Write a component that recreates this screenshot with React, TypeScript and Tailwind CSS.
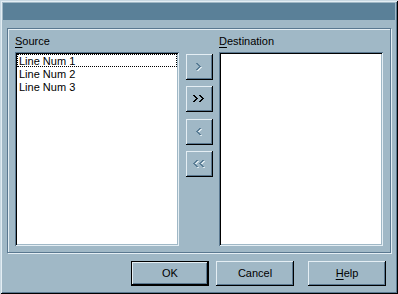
import type { ReactNode } from 'react';

const CHEVRON = [[0, 1], [1, 2], [2, 3], [3, 4], [2, 3], [1, 2], [0, 1]];

function Arrow({ dir, double, disabled }: { dir: 'left' | 'right'; double?: boolean; disabled?: boolean }) {
  const offsets = double ? [0, 6] : [0];
  const w = double ? 12 : 6;
  const pixels = (dx: number, dy: number, color: string) =>
    offsets.flatMap(o =>
      CHEVRON.flatMap((row, r) =>
        row.map(x => {
          const px = dir === 'right' ? x : 4 - x;
          return <rect key={`${color}-${o}-${r}-${x}`} x={o + px + dx} y={r + dy} width={1} height={1} fill={color} />;
        })
      )
    );
  return (
    <svg width={w} height={8} shapeRendering="crispEdges">
      {disabled && pixels(1, 1, '#dce8ee')}
      {pixels(0, 0, disabled ? '#5a7d95' : '#000')}
    </svg>
  );
}

function Accel({ children, rest }: { children: ReactNode; rest: string }) {
  return (
    <span>
      <span className="underline decoration-1 underline-offset-[2px]">{children}</span>
      {rest}
    </span>
  );
}

function SideButton({ children }: { children: ReactNode }) {
  return (
    <div className="h-[26px] w-[27px] flex items-center justify-center pr-[1px] bg-[#a0b8c6] shadow-[inset_-1px_-1px_0_#000,inset_1px_1px_0_#e4eef4,inset_-2px_-2px_0_#5a7890]">
      {children}
    </div>
  );
}

function PushButton({ children, isDefault }: { children: ReactNode; isDefault?: boolean }) {
  return (
    <div
      className={`w-[78px] h-[25px] flex items-center justify-center bg-[#a0b8c6] text-black shadow-[inset_-1px_-1px_0_#000,inset_1px_1px_0_#e4eef4,inset_-2px_-2px_0_#5a7890] ${
        isDefault ? 'border border-black' : ''
      }`}
    >
      {children}
    </div>
  );
}

function ListBox({ items }: { items: string[] }) {
  return (
    <div className="h-[194px] bg-white p-[2px] shadow-[inset_1px_1px_0_#5a7890,inset_-1px_-1px_0_#e4eef4,inset_2px_2px_0_#000,inset_-2px_-2px_0_#a0b8c6]">
      {items.map((item, i) => (
        <div
          key={item}
          className={`h-[13px] pt-[1px] pl-[2px] leading-[12px] text-black ${
            i === 0 ? 'outline-1 outline-dotted outline-black -outline-offset-1' : ''
          }`}
        >
          {item}
        </div>
      ))}
    </div>
  );
}

export default function App() {
  return (
    <div className="w-[398px] h-[294px] p-[3px] flex flex-col bg-[#a0b8c6] font-['Liberation_Sans',Arial,sans-serif] text-[11px] text-black shadow-[inset_1px_1px_0_#c8d8e2,inset_-1px_-1px_0_#000,inset_2px_2px_0_#e4eef4,inset_-2px_-2px_0_#5a7890]">
      {/* Title bar */}
      <div className="h-[17px] shrink-0 bg-[#5a8098]" />

      {/* Group */}
      <div className="mt-[8px] mx-[4px] h-[225px] flex pt-[6px] px-[7px] pb-[6px] border border-[#5a7890] shadow-[inset_1px_1px_0_#e4eef4,1px_1px_0_#e4eef4]">
        <div className="w-[164px] flex flex-col">
          <div className="h-[13px] leading-[13px] mb-[4px]">
            <Accel rest="ource">S</Accel>
          </div>
          <ListBox items={['Line Num 1', 'Line Num 2', 'Line Num 3']} />
        </div>

        <div className="w-[27px] ml-[7px] mr-[6px] pt-[19px] flex flex-col">
          <SideButton>
            <Arrow dir="right" disabled />
          </SideButton>
          <div className="mt-[6px]">
            <SideButton>
              <Arrow dir="right" double />
            </SideButton>
          </div>
          <div className="mt-[7px]">
            <SideButton>
              <Arrow dir="left" disabled />
            </SideButton>
          </div>
          <div className="mt-[6px]">
            <SideButton>
              <Arrow dir="left" double disabled />
            </SideButton>
          </div>
        </div>

        <div className="w-[164px] flex flex-col">
          <div className="h-[13px] leading-[13px] mb-[4px]">
            <Accel rest="estination">D</Accel>
          </div>
          <ListBox items={[]} />
        </div>
      </div>

      {/* Buttons */}
      <div className="mt-[8px] flex justify-end pr-[9px]">
        <PushButton isDefault>OK</PushButton>
        <div className="ml-[7px]">
          <PushButton>Cancel</PushButton>
        </div>
        <div className="ml-[14px]">
          <PushButton>
            <Accel rest="elp">H</Accel>
          </PushButton>
        </div>
      </div>
    </div>
  );
}
